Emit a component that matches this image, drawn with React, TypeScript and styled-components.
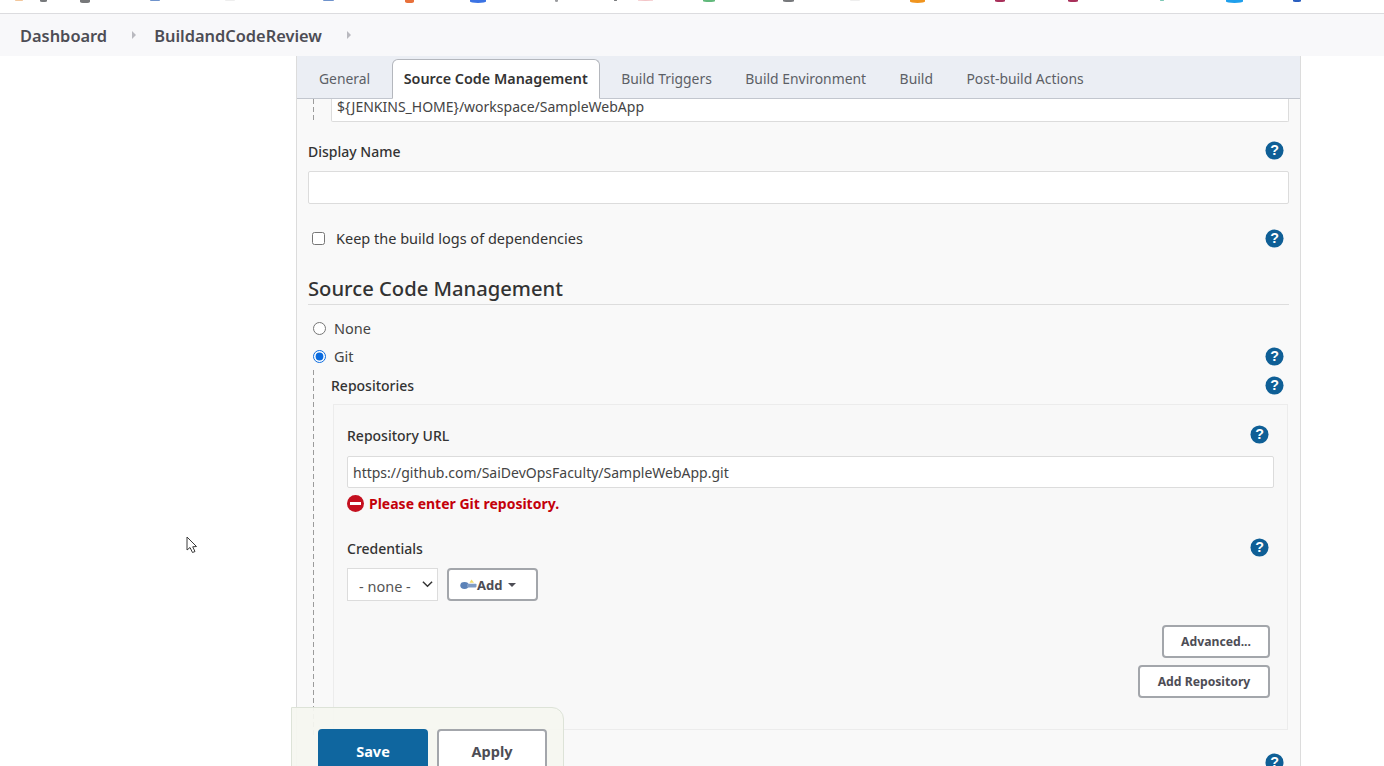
import styled, { createGlobalStyle } from 'styled-components';

const GlobalStyle = createGlobalStyle`
  html, body {
    margin: 0;
    padding: 0;
    height: 766px;
    overflow: hidden;
    background: #ffffff;
  }
  * {
    box-sizing: border-box;
  }
  body {
    font-family: "Noto Sans", "Open Sans", sans-serif;
    color: #333333;
  }
`;

// what is left of the browser bookmarks: gap from previous icon, size, colour
const favicons = [
  { gap: 15, w: 8, h: 1, color: '#f3c79c' },
  { gap: 25, w: 7, h: 2, color: '#77797c' },
  { gap: 40, w: 10, h: 3, color: '#77787a' },
  { gap: 70, w: 10, h: 1, color: '#6f93cc' },
  { gap: 75, w: 10, h: 1, color: '#eeeeee' },
  { gap: 98, w: 11, h: 1, color: '#6f93cc' },
  { gap: 82, w: 9, h: 3, color: '#e8703a' },
  { gap: 65, w: 16, h: 3, color: '#3b73e4' },
  { gap: 85, w: 3, h: 2, color: '#9a9b9e' },
  { gap: 59, w: 3, h: 1, color: '#77797c' },
  { gap: 24, w: 15, h: 1, color: '#f3c3c6' },
  { gap: 65, w: 12, h: 2, color: '#62b97c' },
  { gap: 80, w: 11, h: 2, color: '#77797c' },
  { gap: 67, w: 10, h: 1, color: '#eeeeee' },
  { gap: 60, w: 15, h: 3, color: '#f0941e' },
  { gap: 85, w: 10, h: 2, color: '#a8305a' },
  { gap: 73, w: 10, h: 2, color: '#a8305a' },
  { gap: 92, w: 4, h: 1, color: '#7cc7b4' },
  { gap: 66, w: 17, h: 3, color: '#1f9fec' },
  { gap: 67, w: 8, h: 2, color: '#2b5fc0' },
];

const HelpIcon = () => (
  <HelpSvg viewBox="0 0 20 20" aria-hidden="true">
    <circle cx="10" cy="10" r="9.5" fill="#0f5f96" />
    <HelpMark x="10" y="15">?</HelpMark>
  </HelpSvg>
);

const KeyIcon = () => (
  <svg width="17" height="12" viewBox="0 0 17 12" aria-hidden="true">
    <ellipse cx="4.5" cy="6.5" rx="4.2" ry="3.4" fill="#5b82b8" />
    <rect x="7" y="4.8" width="9.5" height="3.6" rx="0.8" fill="#7f9bc4" />
    <path d="M9.5 3.8 L11.5 0.5 L14 3.8 Z" fill="#f2dc6a" />
  </svg>
);

const App = () => {
  return (
    <>
      <GlobalStyle />
      <Page>
        <BookmarkBar>
          {favicons.map((f, i) => (
            <Favicon key={i} $gap={f.gap} $w={f.w} $h={f.h} $color={f.color} />
          ))}
        </BookmarkBar>
        <Breadcrumbs>
          <Crumb>Dashboard</Crumb>
          <CrumbArrow />
          <Crumb>BuildandCodeReview</Crumb>
          <CrumbArrow />
        </Breadcrumbs>
        <Main>
          <Panel>
            <Tabs>
              <Tab>General</Tab>
              <Tab $active>Source Code Management</Tab>
              <Tab>Build Triggers</Tab>
              <Tab>Build Environment</Tab>
              <Tab>Build</Tab>
              <Tab>Post-build Actions</Tab>
            </Tabs>
            <Body>
              <WorkspaceRow>
                <WorkspaceInput readOnly value="${JENKINS_HOME}/workspace/SampleWebApp" />
              </WorkspaceRow>

              <LabelRow $height={49}>
                <FieldLabel>Display Name</FieldLabel>
                <HelpIcon />
              </LabelRow>
              <TextInput $height={33} readOnly value="" />

              <CheckRow>
                <Checkbox type="checkbox" />
                <CheckLabel>Keep the build logs of dependencies</CheckLabel>
                <HelpIcon />
              </CheckRow>

              <SectionTitle>Source Code Management</SectionTitle>

              <RadioRow>
                <Radio type="radio" name="scm" />
                <RadioLabel>None</RadioLabel>
              </RadioRow>
              <RadioRow>
                <Radio type="radio" name="scm" defaultChecked />
                <RadioLabel>Git</RadioLabel>
                <HelpIcon />
              </RadioRow>

              <GitBlock>
                <RepoHeader>
                  <FieldLabel>Repositories</FieldLabel>
                  <HelpIcon />
                </RepoHeader>
                <RepoCard>
                  <LabelRow $height={51}>
                    <FieldLabel>Repository URL</FieldLabel>
                    <HelpIcon />
                  </LabelRow>
                  <TextInput $height={32} readOnly value="https://github.com/SaiDevOpsFaculty/SampleWebApp.git" />
                  <ErrorRow>
                    <ErrorIcon />
                    <span>Please enter Git repository.</span>
                  </ErrorRow>
                  <LabelRow $height={49}>
                    <FieldLabel>Credentials</FieldLabel>
                    <HelpIcon />
                  </LabelRow>
                  <CredentialRow>
                    <SelectWrap>
                      <NoneSelect defaultValue="none">
                        <option value="none">- none -</option>
                      </NoneSelect>
                      <SelectChevron viewBox="0 0 12 8" aria-hidden="true">
                        <path d="M1 1.5 L6 6.5 L11 1.5" fill="none" stroke="#333333" strokeWidth="1.6" />
                      </SelectChevron>
                    </SelectWrap>
                    <AddButton type="button">
                      <KeyIcon />
                      Add
                      <Caret />
                    </AddButton>
                  </CredentialRow>
                  <RepoActions>
                    <GhostButton type="button" $width={108}>Advanced...</GhostButton>
                    <GhostButton type="button" $width={132}>Add Repository</GhostButton>
                  </RepoActions>
                </RepoCard>
              </GitBlock>
              <BottomHelp>
                <HelpIcon />
              </BottomHelp>
            </Body>
          </Panel>
        </Main>

        <SaveBar>
          <SaveButton type="button">Save</SaveButton>
          <ApplyButton type="button">Apply</ApplyButton>
        </SaveBar>

        <Cursor viewBox="0 0 12 18" aria-hidden="true">
          <path d="M1 1 L1 14 L4 11.5 L6.5 16.5 L9 15.5 L6.7 10.8 L10.5 10.5 Z" fill="#ffffff" stroke="#3a3a3a" strokeWidth="1" />
        </Cursor>
      </Page>
    </>
  );
};

const Page = styled.div`
  position: relative;
  width: 1384px;
  height: 766px;
  overflow: hidden;
`;

const BookmarkBar = styled.div`
  display: flex;
  align-items: flex-start;
  height: 14px;
  background: #ffffff;
  border-bottom: 1px solid #dcdcdf;
`;

const Favicon = styled.span<{ $gap: number; $w: number; $h: number; $color: string }>`
  flex: none;
  margin-left: ${(p) => p.$gap}px;
  margin-right: ${(p) => -p.$w}px;
  width: ${(p) => p.$w}px;
  height: ${(p) => p.$h}px;
  background: ${(p) => p.$color};
  border-radius: 0 0 50% 50%;
`;

const Breadcrumbs = styled.nav`
  display: flex;
  align-items: center;
  height: 42px;
  padding-left: 20px;
  background: #f8f8fa;
`;

const Crumb = styled.a`
  font-size: 16.4px;
  font-weight: 600;
  color: #4d4d55;
`;

const CrumbArrow = styled.span`
  width: 0;
  height: 0;
  margin: 0 18px 0 25px;
  border-left: 4px solid #b9b9bf;
  border-top: 4px solid transparent;
  border-bottom: 4px solid transparent;
`;

const Main = styled.main`
  display: flex;
  padding-left: 296px;
`;

const Panel = styled.section`
  width: 1005px;
  height: 710px;
  overflow: hidden;
  background: #f9f9f9;
  border-left: 1px solid #dcdcdc;
  border-right: 1px solid #dcdcdc;
`;

const Tabs = styled.div`
  display: flex;
  align-items: flex-end;
  height: 43px;
  padding-left: 10px;
  background: #ebeef4;
  border-bottom: 1px solid #c2c6ce;
`;

const Tab = styled.a<{ $active?: boolean }>`
  display: flex;
  align-items: center;
  height: ${(p) => (p.$active ? '40px' : '42px')};
  margin-right: 9.5px;
  margin-bottom: ${(p) => (p.$active ? '-1px' : '0')};
  padding: ${(p) => (p.$active ? '0 11px 1px' : '3px 12px 0')};
  font-size: ${(p) => (p.$active ? '14.35px' : '13.9px')};
  font-weight: ${(p) => (p.$active ? 600 : 400)};
  color: ${(p) => (p.$active ? '#333333' : '#5c5f66')};
  background: ${(p) => (p.$active ? '#ffffff' : 'transparent')};
  border: ${(p) => (p.$active ? '1px solid #b4b7bd' : 'none')};
  border-bottom: ${(p) => (p.$active ? '1px solid #ffffff' : 'none')};
  border-radius: 6px 6px 0 0;
`;

const Body = styled.div`
  padding: 0 11px;
`;

const dashedLine = `
  background-image: linear-gradient(#9c9c9c 62%, transparent 0);
  background-size: 1px 8px;
  background-repeat: repeat-y;
  background-position: left top;
`;

const WorkspaceRow = styled.div`
  ${dashedLine}
  margin-left: 5px;
  padding-left: 18px;
`;

const TextInput = styled.input<{ $height: number }>`
  display: block;
  width: 100%;
  height: ${(p) => p.$height}px;
  padding: 0 5px;
  font-family: inherit;
  font-size: 14px;
  color: #444444;
  background: #ffffff;
  border: 1px solid #dcdcdc;
  border-radius: 2px;
  outline: none;
`;

const WorkspaceInput = styled.input`
  display: block;
  width: 100%;
  height: 23px;
  padding: 0 5px 8px;
  font-family: inherit;
  font-size: 14px;
  color: #444444;
  background: #ffffff;
  border: 1px solid #dcdcdc;
  border-top: none;
  border-radius: 0 0 2px 2px;
  outline: none;
`;

const FieldLabel = styled.label`
  font-size: 14px;
  font-weight: 500;
  color: #333333;
`;

const LabelRow = styled.div<{ $height: number }>`
  display: flex;
  align-items: center;
  justify-content: space-between;
  height: ${(p) => p.$height}px;
  padding: 7px 5px 0 0;

  ${FieldLabel} {
    margin-top: 2px;
  }
`;

const HelpSvg = styled.svg`
  flex: none;
  width: 19px;
  height: 19px;
`;

const HelpMark = styled.text`
  font-family: "Liberation Sans", sans-serif;
  font-size: 15px;
  font-weight: 700;
  fill: #ffffff;
  text-anchor: middle;
`;

const CheckRow = styled.div`
  display: flex;
  align-items: center;
  height: 69px;
  padding: 0 5px 1px 4px;
`;

const Checkbox = styled.input`
  width: 13px;
  height: 13px;
  margin: 0 11px 0 0;
`;

const CheckLabel = styled.span`
  flex: 1;
  font-size: 14.5px;
  color: #333333;
`;

const SectionTitle = styled.h2`
  margin: 0 0 9px;
  height: 32px;
  font-size: 20.2px;
  font-weight: 500;
  line-height: 30px;
  color: #333333;
  border-bottom: 1px solid #dddddd;
`;

const RadioRow = styled.div`
  display: flex;
  align-items: center;
  height: 28px;
  padding: 0 5px 0 5px;
`;

const Radio = styled.input`
  width: 13px;
  height: 13px;
  margin: 0 8px 0 0;
  accent-color: #0b6bde;
`;

const RadioLabel = styled.span`
  flex: 1;
  font-size: 14.5px;
  color: #444444;
`;

const GitBlock = styled.div`
  ${dashedLine}
  margin-left: 5px;
  padding: 1px 0 6px 20px;
`;

const RepoHeader = styled.div`
  display: flex;
  align-items: center;
  justify-content: space-between;
  height: 28px;
  margin-left: -2px;
  padding-right: 5px;
`;

const RepoCard = styled.div`
  height: 326px;
  margin: 5px 1px 0 0;
  padding: 0 13px;
  background: #f8f8f8;
  border: 1px solid #ececec;
`;

const ErrorRow = styled.div`
  display: flex;
  align-items: center;
  gap: 5px;
  height: 31px;
  font-size: 14px;
  font-weight: 700;
  color: #c4000a;
`;

const ErrorIcon = styled.span`
  position: relative;
  flex: none;
  width: 17px;
  height: 17px;
  background: #c4101f;
  border-radius: 50%;

  &::after {
    content: '';
    position: absolute;
    left: 3px;
    right: 3px;
    top: 7px;
    height: 3px;
    background: #ffffff;
  }
`;

const CredentialRow = styled.div`
  display: flex;
  gap: 9px;
  height: 33px;
`;

const SelectWrap = styled.div`
  position: relative;
  width: 91px;
  height: 33px;
`;

const NoneSelect = styled.select`
  appearance: none;
  width: 100%;
  height: 100%;
  padding: 2px 0 0 11px;
  font-family: inherit;
  font-size: 14.5px;
  color: #555555;
  background: #ffffff;
  border: 1px solid #dcdcdc;
  border-radius: 0;
`;

const SelectChevron = styled.svg`
  position: absolute;
  right: 5px;
  top: 12px;
  width: 11px;
  height: 8px;
  pointer-events: none;
`;

const buttonBase = `
  font-family: inherit;
  font-weight: 700;
  border-radius: 4px;
  background: #ffffff;
  border: 2px solid #a3a6ab;
  color: #4d4d55;
`;

const AddButton = styled.button`
  ${buttonBase}
  display: flex;
  align-items: center;
  width: 91px;
  padding: 0 0 0 11px;
  font-size: 13px;
`;

const Caret = styled.span`
  margin-left: 6px;
  border-left: 4.5px solid transparent;
  border-right: 4.5px solid transparent;
  border-top: 4.5px solid #4d4d55;
`;

const RepoActions = styled.div`
  display: flex;
  flex-direction: column;
  align-items: flex-end;
  gap: 7px;
  margin: 24px 4px 0 0;
`;

const GhostButton = styled.button<{ $width: number }>`
  ${buttonBase}
  width: ${(p) => p.$width}px;
  height: 33px;
  padding: 0;
  font-size: 12.2px;
`;

const BottomHelp = styled.div`
  display: flex;
  justify-content: flex-end;
  margin-top: 17px;
  padding-right: 5px;
`;

const SaveBar = styled.div`
  position: absolute;
  left: 291px;
  top: 707px;
  display: flex;
  gap: 9px;
  width: 273px;
  height: 80px;
  padding: 21px 0 0 26px;
  background: rgba(245, 246, 240, 0.94);
  border: 1px solid #dde3d8;
  border-radius: 0 12px 0 0;
`;

const SaveButton = styled.button`
  width: 110px;
  height: 50px;
  padding: 0 0 6px;
  font-family: inherit;
  font-size: 14.5px;
  font-weight: 700;
  color: #ffffff;
  background: #0f669f;
  border: none;
  border-radius: 4px;
`;

const ApplyButton = styled.button`
  ${buttonBase}
  width: 110px;
  height: 50px;
  padding: 0 0 6px;
  font-size: 14.5px;
`;

const Cursor = styled.svg`
  position: absolute;
  left: 186px;
  top: 536px;
  width: 12px;
  height: 18px;
`;

export default App;
